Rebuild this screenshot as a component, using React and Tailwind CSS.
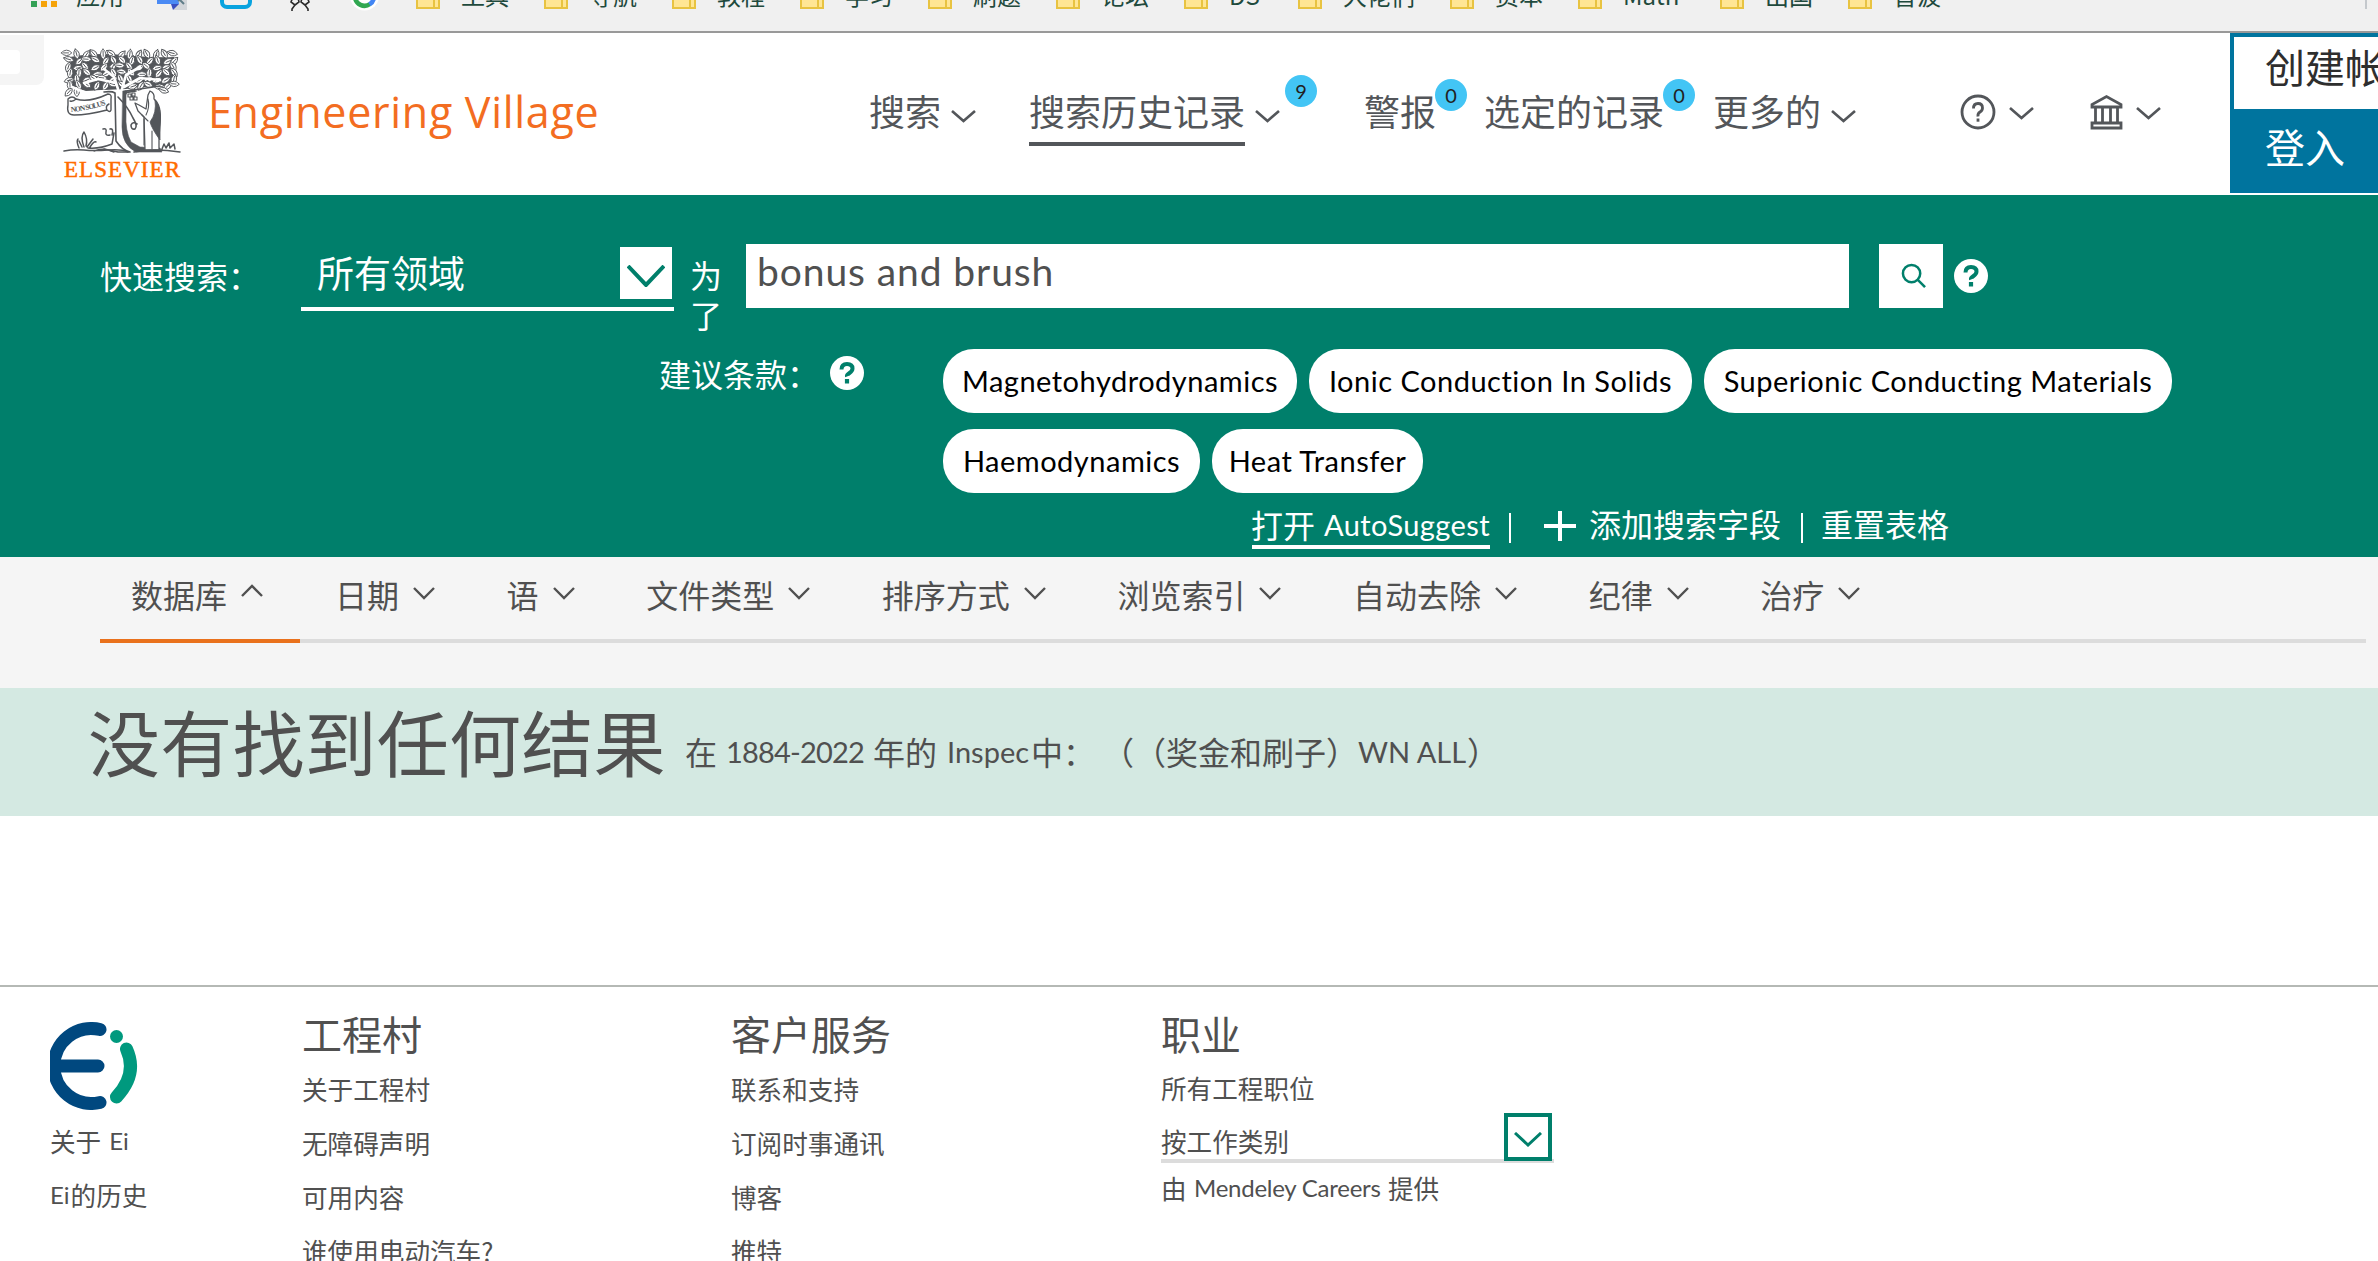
import React from "react";

const Latin = ({ children, className = "" }) => (
  <span className={"font-['Lato'] [font-variant-ligatures:none] " + className}>{children}</span>
);

const Chevron = ({ w = 24, h = 13, up = false, stroke = 2.6, className = "" }) => (
  <svg width={w} height={h} viewBox={`0 0 ${w} ${h}`} className={"shrink-0 " + className} fill="none" stroke="currentColor" strokeWidth={stroke}>
    {up ? (
      <path d={`M1 ${h - 1} L${w / 2} 2 L${w - 1} ${h - 1}`} />
    ) : (
      <path d={`M1 1 L${w / 2} ${h - 2} L${w - 1} 1`} />
    )}
  </svg>
);

const Folder = () => (
  <svg width="24" height="24" viewBox="0 0 24 24" className="shrink-0">
    <path d="M1 1h10l2 4h10v18H1z" fill="#ffe694" stroke="#e8c341" strokeWidth="2" />
    <path d="M18 23V14h4" fill="none" stroke="#e8c341" strokeWidth="2" />
  </svg>
);

const bookmarks = [
  ["工具", "w-[128px]"],
  ["导航", "w-[128px]"],
  ["教程", "w-[128px]"],
  ["学习", "w-[128px]"],
  ["刷题", "w-[128px]"],
  ["论坛", "w-[128px]"],
  ["DS", "w-[114px]"],
  ["大佬们", "w-[152px]"],
  ["资本", "w-[128px]"],
  ["Math", "w-[142px]"],
  ["出国", "w-[128px]"],
  ["音波", "w-[128px]"],
];

function BookmarkBar() {
  return (
    <div className="h-[33px] overflow-hidden border-b-2 border-[#999999] bg-[#f0f0f0] text-[24px] text-[#1f4a3d]">
      <div className="-mt-[15px] flex h-[24px] items-center pl-[31px] leading-[24px]">
        <div className="flex h-[24px] w-[45px] items-end gap-[4px] pb-[2px]">
          <i className="h-[6px] w-[6px] bg-[#34a156]" />
          <i className="h-[6px] w-[6px] bg-[#f5a30a]" />
          <i className="h-[6px] w-[6px] bg-[#f5a30a]" />
        </div>
        <span className="-mt-[5px] w-[81px]">应用</span>
        <svg width="30" height="26" viewBox="0 0 30 26" className="mr-[33px]">
          <path d="M14 10h16v16H17z" fill="#d3d6da" />
          <path d="M0 0h19l3 20H0z" fill="#4a8af4" />
          <path d="M14 20h8l-6 6z" fill="#3a4fc0" />
          <path d="M20 13l7 7M21 17l4-3" stroke="#5f7d88" strokeWidth="2" />
        </svg>
        <svg width="32" height="24" viewBox="0 0 32 24" className="mr-[37px]">
          <rect x="2" y="-4" width="28" height="26" rx="5" fill="none" stroke="#08a3df" strokeWidth="4" />
        </svg>
        <svg width="22" height="28" viewBox="0 0 22 28" className="mr-[39px]" fill="none" stroke="#2b2b2b" strokeWidth="1.600">
          <path d="M4 14l-2 5 4 3-3 4v2M18 14l2 5-4 3 3 4v2M6 22l4-3-1-4M16 22l-4-3 1-4" />
        </svg>
        <svg width="29" height="27" viewBox="0 0 29 27" className="mr-[37px]">
          <circle cx="14.500" cy="12" r="14.500" fill="#fff" />
          <path d="M5 13a9.500 9.500 0 0 0 15 7" fill="none" stroke="#32a852" strokeWidth="4.500" />
          <path d="M19.500 20.400a9.500 9.500 0 0 0 4.500-8" fill="none" stroke="#4285f4" strokeWidth="4.500" />
        </svg>
        {bookmarks.map(([t, w]) => (
          <div key={t} className={"flex shrink-0 items-center gap-[21px] " + w}>
            <Folder />
            <span className="-mt-[5px] whitespace-nowrap">{t}</span>
          </div>
        ))}
        <i className="ml-[389px] h-[24px] w-[2px] shrink-0 bg-[#c4c8cc]" />
      </div>
    </div>
  );
}

const leaves = [];
for (let r = 0; r < 7; r++) {
  for (let c = 0; c < 13; c++) {
    const n = Math.sin(r * 37.1 + c * 17.7) * 1000;
    const f = n - Math.floor(n);
    const x = 5 + c * 8.8 + (r % 2) * 2 - 1 + (f - 0.5) * 3;
    const y = 6 + r * 8.6 + (f - 0.5) * 4;
    if (r === 6 && ((c > 1 && c < 11) || c === 12)) continue;
    leaves.push([x, y, Math.floor(f * 180)]);
  }
}

function ElsevierLogo() {
  return (
    <svg width="116" height="132" viewBox="0 0 116 132" className="mt-[16px] shrink-0 overflow-visible">
      <g stroke="#53565a" fill="none" strokeLinecap="round" strokeLinejoin="round">
        <path d="M6 8Q30 3 60 6T110 8L109 36 97 38 75 38 62 40 40 41 22 42 8 38Z" fill="#53565a" stroke="none" />
        {leaves.map(([x, y, a], i) => (
          <path
            key={i}
            transform={`translate(${Math.min(x, 110)} ${y * 0.72 + 1}) rotate(${a})`}
            d="M-5.300 0Q0 -5.600 5.300 0Q0 5.600 -5.300 0M-3 0H2"
            fill="#fff"
            strokeWidth="0.900"
          />
        ))}
        <path d="M8 38l14 6 18-2 12 4M54 40L50 28 40 20M58 40l4-14 14-8M60 38l16-9 20 2M52 34l-18-4-14 4" stroke="#fff" strokeWidth="2.600" />
        <path d="M51 44L52 92Q58 101 66 103L54 103 40 100M51 44Q48 42 40 43" strokeWidth="1.600" />
        <path d="M59 42Q65 40 62 46L62 64Q61 82 67 93L76 98 96 99 98 103H72Q58 96 58 78Z" fill="#53565a" strokeWidth="0.600" />
        <path d="M54 48Q64 58 69 69Q74 77 71 80Q67 81 67 76Q69 72 73 75" strokeWidth="1.600" />
        <path d="M62 42L96 37M60 44L72 42" strokeWidth="1.600" />
        <path d="M86 42Q91 44 90 50Q98 56 96 75L95 88 95 101H81L80 68 74 62 71 54 75 56 82 60 84 46Z" fill="#fff" strokeWidth="1.300" />
        <path d="M91 51Q98 58 96 78L96 91Q88 80 86 73Q93 64 91 51Z" fill="#53565a" strokeWidth="0.800" />
        <path d="M80 70V96M88 82L88 100M84 50Q86 58 82 66M78 66l6 6" strokeWidth="1.100" />
        <path d="M64 45h3v3h-3zM68 44h3v3h-3zM66 48h3v3h-3zM70 48h3v3h-3z" strokeWidth="1.100" />
        <path d="M4 50Q8 46 12 50Q25 54 44 45Q48 45 47 50V61Q46 64 43 61Q24 66 10 66Q2 66 4 56ZM12 50Q9 53 6 52M43 61Q41 57 45 55" fill="#fff" strokeWidth="1.400" />
        <path d="M39 80q4-1 3 3t4 3M46 80q4-1 2 6M50 84l-2 11Q36 100 24 99M20 98Q16 88 20 83Q24 90 22 97M15 99Q12 92 14 90M26 98Q30 92 32 93M18 98l-3-6M23 98l6-8" strokeWidth="1.500" />
        <path d="M0 102Q10 100 20 101T44 101T64 103M30 102Q40 98 50 103M70 103Q90 99 116 103M98 100l2-5 2 4 3-5 1 5 4-4 1 5" strokeWidth="1.500" />
      </g>
      <path id="scroll" d="M7 63Q24 62 44 55" fill="none" />
      <text fontFamily="Liberation Serif, serif" fontWeight="700" fontSize="7.500" fill="#53565a">
        <textPath href="#scroll" textLength="36">NON SOLUS</textPath>
      </text>
      <text x="0" y="127.500" textLength="116" lengthAdjust="spacing" fontFamily="Liberation Serif, serif" fontSize="23" fill="#ff6c00" stroke="#ff6c00" strokeWidth="0.500">ELSEVIER</text>
    </svg>
  );
}

const Badge = ({ children, className }) => (
  <span className={"absolute flex h-[32px] w-[32px] items-center justify-center rounded-full bg-[#43c5f5] font-['Lato'] text-[20px] leading-none text-[#222] " + className}>
    {children}
  </span>
);

function Header() {
  return (
    <header className="relative flex h-[162px] items-start overflow-hidden bg-white pl-[64px] text-[#53565a]">
      <div className="absolute top-[2px] left-0 h-[50px] w-[44px] rounded-br-[8px] bg-[#f5f5f5] pt-[15px]">
        <div className="h-[24px] w-[20px] rounded-r-[4px] bg-white" />
      </div>
      <ElsevierLogo />
      <div className="ml-[28px] flex h-[157px] w-[661px] shrink-0 items-center">
        <h1 className="font-['Open_Sans'] text-[43px] leading-none tracking-[0.7px] whitespace-nowrap text-[#f36d21]">Engineering Village</h1>
      </div>
      <nav className="flex h-[153px] shrink-0 items-center text-[36px] leading-none whitespace-nowrap">
        <div className="flex w-[160px] items-center">
          搜索
          <Chevron w={25} className="mt-[14px] ml-[10px]" />
        </div>
        <div className="relative flex w-[335px] items-center">
          <span className="relative after:absolute after:top-[50px] after:left-0 after:h-[4px] after:w-full after:bg-[#53565a]">搜索历史记录</span>
          <Chevron w={25} className="mt-[14px] ml-[10px]" />
          <Badge className="-top-[17px] left-[256px]">9</Badge>
        </div>
        <div className="relative w-[120px]">
          警报
          <Badge className="-top-[13px] left-[71px]">0</Badge>
        </div>
        <div className="relative w-[229px]">
          选定的记录
          <Badge className="-top-[13px] left-[179px]">0</Badge>
        </div>
        <div className="flex w-[247px] items-center">
          更多的
          <Chevron w={25} className="mt-[14px] ml-[10px]" />
        </div>
        <div className="flex w-[130px] items-center">
          <svg width="36" height="36" viewBox="0 0 36 36" fill="none" stroke="currentColor" strokeWidth="2.800" className="mt-[5px]">
            <circle cx="18" cy="18" r="16" />
            <path d="M13.500 14.500Q13.500 9.500 18 9.500T22.500 14Q22.500 16.500 20 18T18 22.500" />
            <path d="M18 24.500v3.200" />
          </svg>
          <Chevron w={25} className="mt-[8px] ml-[13px]" />
        </div>
        <div className="flex w-[140px] items-center">
          <svg width="33" height="36" viewBox="0 0 33 36" fill="none" stroke="currentColor" strokeWidth="2.800" className="mt-[5px]">
            <path d="M2 13V10.500L16.500 2.500 31 10.500V13ZM5.500 13v16M12.500 13v16M20.500 13v16M27.500 13v16M2 34v-5h29v5Z" />
          </svg>
          <Chevron w={25} className="mt-[8px] ml-[13px]" />
        </div>
      </nav>
      <div className="h-[160px] w-[148px] shrink-0 overflow-hidden bg-[#00749e] pt-[4px] pl-[4px] text-[40px] leading-none whitespace-nowrap">
        <div className="flex h-[72px] items-center overflow-hidden bg-white pb-[14px] pl-[31px] text-[#2e2e2e]">创建帐户</div>
        <div className="flex h-[74px] items-center pl-[31px] text-white">登入</div>
      </div>
    </header>
  );
}

const Help = ({ className = "" }) => (
  <svg width="36" height="36" viewBox="0 0 36 36" className={"shrink-0 " + className}>
    <circle cx="18" cy="18" r="17" fill="#fff" />
    <path d="M12.500 14.500Q12.500 9 18 9T23.500 13.500Q23.500 16 20.500 18T18 21.500" fill="none" stroke="#007f6b" strokeWidth="4" />
    <path d="M18 24v4.500" stroke="#007f6b" strokeWidth="4.200" />
  </svg>
);

const Pill = ({ children, className }) => (
  <span className={"flex h-[64px] items-center justify-center rounded-[31px] bg-white pb-[1px] font-['Lato'] text-[29px] leading-none tracking-[0.5px] whitespace-nowrap text-black [font-variant-ligatures:none] " + className}>
    {children}
  </span>
);

function SearchPanel() {
  return (
    <section className="h-[362px] bg-[#007f6b] pt-[49px] text-[32px] leading-none whitespace-nowrap text-white">
      <div className="flex h-[105px] items-start pl-[100px]">
        <span className="mt-[15px] w-[201px] shrink-0">快速搜索：</span>
        <div className="mt-[3px] flex h-[64px] w-[373px] shrink-0 items-start border-b-4 border-white">
          <span className="mt-[7px] w-[319px] pl-[16px] text-[37px]">所有领域</span>
          <span className="flex h-[52px] w-[52px] items-center justify-center bg-white text-[#007f6b]">
            <Chevron w={38} h={22} stroke={4} className="mt-[6px]" />
          </span>
        </div>
        <span className="mt-[10px] ml-[16px] w-[56px] shrink-0 leading-[40px]">为<br />了</span>
        <div className="h-[64px] w-[1103px] shrink-0 bg-white pt-[8px] pl-[11px] font-['Lato'] text-[39px] tracking-[0.9px] text-[#505050]">bonus and brush</div>
        <button className="ml-[30px] flex h-[64px] w-[64px] shrink-0 items-center justify-center bg-white">
          <svg width="25" height="25" viewBox="0 0 26 26" fill="none" stroke="#007f6b" strokeWidth="2.600" className="mt-[-2px] ml-[4px]">
            <circle cx="11" cy="11" r="9" />
            <path d="M17.500 17.500L25 25" />
          </svg>
        </button>
        <Help className="mt-[14px] ml-[10px]" />
      </div>
      <div className="flex h-[156px] items-start pl-[659px]">
        <span className="mt-[8px] w-[170px] shrink-0">建议条款：</span>
        <Help className="mt-[6px]" />
        <div className="ml-[78px] grid gap-[16px]">
          <div className="flex gap-[12px]">
            <Pill className="w-[354px]">Magnetohydrodynamics</Pill>
            <Pill className="w-[383px]">Ionic Conduction In Solids</Pill>
            <Pill className="w-[468px]">Superionic Conducting Materials</Pill>
          </div>
          <div className="flex gap-[12px]">
            <Pill className="w-[257px]">Haemodynamics</Pill>
            <Pill className="w-[211px]">Heat Transfer</Pill>
          </div>
        </div>
      </div>
      <div className="flex h-[44px] items-start pl-[1252px]">
        <span className="h-[44px] w-[238px] border-b-4 border-white">
          <span className="-ml-[1px] flex h-[38px] items-center gap-[9px]">打开 <Latin className="text-[29px] tracking-[0.4px]">AutoSuggest</Latin></span>
        </span>
        <i className="mt-[8px] ml-[19px] h-[30px] w-[2px] bg-white" />
        <svg width="32" height="32" viewBox="0 0 32 32" className="mt-[5px] ml-[33px]" stroke="#fff" strokeWidth="4">
          <path d="M16 1v30M0 16h32" />
        </svg>
        <span className="mt-[2px] ml-[13px]">添加搜索字段</span>
        <i className="mt-[8px] ml-[20px] h-[30px] w-[2px] bg-white" />
        <span className="mt-[2px] ml-[18px]">重置表格</span>
      </div>
    </section>
  );
}

const tabs = ["日期", "语", "文件类型", "排序方式", "浏览索引", "自动去除", "纪律", "治疗"];

function Tabs() {
  return (
    <section className="h-[131px] bg-[#f5f5f5] pr-[12px] pl-[100px] text-[32px] leading-none whitespace-nowrap text-[#505050]">
      <div className="flex h-[86px]">
        <div className="flex h-[86px] w-[200px] shrink-0 items-start border-b-4 border-[#e9711c] pt-[21px] pl-[31px]">
          数据库
          <Chevron up w={22} h={13} stroke={2.4} className="mt-[6px] ml-[14px]" />
        </div>
        <div className="flex flex-1 items-start gap-[71.6px] border-b-4 border-[#dcdcdc] pt-[21px] pl-[35px]">
          {tabs.map((t) => (
            <div key={t} className="flex shrink-0 items-start">
              {t}
              <Chevron w={22} h={13} stroke={2.4} className="mt-[9px] ml-[14px]" />
            </div>
          ))}
        </div>
      </div>
    </section>
  );
}

function Results() {
  return (
    <section className="flex h-[128px] items-start bg-[#d4e9e2] pl-[88px] leading-none whitespace-nowrap text-[#505050]">
      <h2 className="mt-[16px] w-[597px] text-[72px] tracking-[0.2px]">没有找到任何结果</h2>
      <p className="flex items-center pt-[47px] text-[32px]">
        <span className="w-[41px]">在</span>
        <Latin className="w-[147px] text-[29px] tracking-[-0.8px]">1884-2022</Latin>
        <span className="w-[74px]">年的</span>
        <Latin className="w-[84px] text-[29px]">Inspec</Latin>
        <span className="w-[71px]">中：</span>
        <span className="[text-spacing-trim:space-all]">（（奖金和刷子）</span>
        <Latin className="w-[109px] text-[29px]">WN ALL</Latin>
        <span className="[text-spacing-trim:space-all]">）</span>
      </p>
    </section>
  );
}

const FooterColumn = ({ title, links, className }) => (
  <div className={"shrink-0 " + className}>
    <h3 className="mb-[7px] h-[42px] text-[40px]">{title}</h3>
    {links.map((l) => (
      <p key={l} className="flex h-[54px] items-center">{l}</p>
    ))}
  </div>
);

function Footer() {
  return (
    <footer className="mt-[169px] flex h-[276px] items-start overflow-hidden border-t-2 border-[#b5b9b5] bg-white pl-[50px] text-[25.6px] leading-none whitespace-nowrap text-[#505050]">
      <div className="w-[252px] shrink-0 pt-[35px]">
        <svg width="88" height="88" viewBox="0 0 88 88" fill="none" strokeWidth="13" strokeLinecap="round">
          <path d="M50 7.500A37.500 37.500 0 1 0 50 80.500M8 44H48" stroke="#00487f" />
          <circle cx="66.500" cy="14.500" r="6.500" fill="#00997e" />
          <path d="M76.500 27Q88 52 66.500 75" stroke="#00997e" />
        </svg>
        <p className="mt-[4px] flex h-[54px] items-center gap-[8px]">关于 <Latin className="text-[24px]">Ei</Latin></p>
        <p className="flex h-[54px] items-center gap-[1px]"><Latin className="text-[24px]">Ei</Latin>的历史</p>
      </div>
      <FooterColumn title="工程村" className="w-[429px] pt-[26px]" links={["关于工程村", "无障碍声明", "可用内容", "谁使用电动汽车?"]} />
      <FooterColumn title="客户服务" className="w-[430px] pt-[26px]" links={["联系和支持", "订阅时事通讯", "博客", "推特"]} />
      <div className="w-[393px] pt-[26px]">
        <h3 className="mb-[8px] h-[42px] text-[40px]">职业</h3>
        <p className="flex h-[50px] items-center">所有工程职位</p>
        <div className="flex h-[50px] items-start justify-between border-b-4 border-[#dcdcdc] pr-[2px]">
          <span className="mt-[15px]">按工作类别</span>
          <span className="flex h-[48px] w-[48px] shrink-0 items-center justify-center border-4 border-[#007f6b] bg-white text-[#007f6b]">
            <Chevron w={28} h={15} stroke={3} className="mt-[4px]" />
          </span>
        </div>
        <p className="mt-[12px] flex items-center">
          <span className="w-[33px]">由</span>
          <Latin className="w-[194px] text-[24px] tracking-[-0.25px]">Mendeley Careers</Latin>
          提供
        </p>
      </div>
    </footer>
  );
}

export default function App() {
  return (
    <div className="h-[1261px] w-[2378px] overflow-hidden bg-white font-['Noto_Sans_CJK_SC',sans-serif]">
      <BookmarkBar />
      <Header />
      <SearchPanel />
      <Tabs />
      <Results />
      <Footer />
    </div>
  );
}
